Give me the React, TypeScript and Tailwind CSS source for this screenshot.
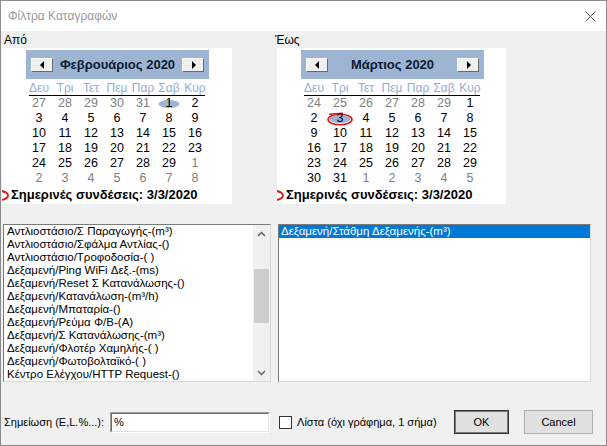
import React from "react";

type Day = { n: number; muted?: boolean };

const WEEKDAYS = ["Δευ", "Τρι", "Τετ", "Πεμ", "Παρ", "Σαβ", "Κυρ"];

function range(a: number, b: number, muted = false): Day[] {
  const out: Day[] = [];
  for (let i = a; i <= b; i++) out.push({ n: i, muted });
  return out;
}

const FEB: Day[] = [
  ...range(27, 31, true),
  ...range(1, 29),
  ...range(1, 8, true),
];

const MAR: Day[] = [
  ...range(24, 29, true),
  ...range(1, 31),
  ...range(1, 5, true),
];

const LEFT_ITEMS = [
  "Αντλιοστάσιο/Σ Παραγωγής-(m³)",
  "Αντλιοστάσιο/Σφάλμα Αντλίας-()",
  "Αντλιοστάσιο/Τροφοδοσία-( )",
  "Δεξαμενή/Ping WiFi Δεξ.-(ms)",
  "Δεξαμενή/Reset Σ Κατανάλωσης-()",
  "Δεξαμενή/Κατανάλωση-(m³/h)",
  "Δεξαμενή/Μπαταρία-()",
  "Δεξαμενή/Ρεύμα Φ/Β-(A)",
  "Δεξαμενή/Σ Κατανάλωσης-(m³)",
  "Δεξαμενή/Φλοτέρ Χαμηλής-( )",
  "Δεξαμενή/Φωτοβολταϊκό-( )",
  "Κέντρο Ελέγχου/HTTP Request-()",
];

function NavButton({ dir }: { dir: "left" | "right" }) {
  return (
    <div className="w-[22px] h-[14px] bg-[#f0f0f0] border border-t-white border-l-white border-b-[#696969] border-r-[#696969] flex items-center justify-center">
      <svg width="5" height="8" viewBox="0 0 5 8">
        {dir === "left" ? (
          <polygon points="4,0 4,8 0,4" fill="#000" />
        ) : (
          <polygon points="1,0 1,8 5,4" fill="#000" />
        )}
      </svg>
    </div>
  );
}

function Calendar({
  title,
  days,
  selected,
  today,
}: {
  title: string;
  days: Day[];
  selected: number;
  today?: boolean;
}) {
  return (
    <div className="h-[156px] bg-white relative overflow-hidden">
      <div className="mt-[2px] ml-[24px] w-[183px] h-[29px] bg-[#9db5d2] flex items-center justify-between px-[5px]">
        <NavButton dir="left" />
        <span className="text-[13px] font-bold text-[#0b1a33]">{title}</span>
        <NavButton dir="right" />
      </div>
      <div className="ml-[24px] w-[182px] mt-[3px]">
        <div className="grid grid-cols-7 h-[13px] text-[12px] leading-[13px] text-[#93acd6]">
          {WEEKDAYS.map((w) => (
            <div key={w} className="text-center">
              {w}
            </div>
          ))}
        </div>
        <div className="mx-[3px] h-px bg-black" />
        <div className="grid grid-cols-7">
          {days.map((d, i) => (
            <div
              key={i}
              className={`relative h-[15px] flex items-center justify-center text-[12.5px] ${
                d.muted ? "text-[#808080]" : "text-black"
              }`}
            >
              {i === selected && (
                <span className="absolute left-1/2 top-1/2 -translate-x-1/2 -translate-y-1/2 w-[21px] h-[8px] rounded-[50%] bg-[#9db5d2]" />
              )}
              {i === selected && today && (
                <svg
                  className="absolute left-1/2 top-1/2 -translate-x-1/2 -translate-y-1/2"
                  width="28"
                  height="14"
                  viewBox="0 0 28 14"
                >
                  <ellipse cx="14" cy="7.5" rx="12" ry="5.2" fill="none" stroke="#e01b1b" strokeWidth="1.6" />
                  <path d="M3 2.2 L17 1.2" stroke="#e01b1b" strokeWidth="1.6" fill="none" />
                </svg>
              )}
              <span className="relative">{d.n}</span>
            </div>
          ))}
        </div>
      </div>
      <div className="h-[16px] flex items-center pl-[9px] mt-[1px] text-[13px] font-bold text-black relative">
        <svg className="absolute left-0 top-[3px]" width="8" height="11" viewBox="0 0 8 11">
          <ellipse cx="-2" cy="5.5" rx="8" ry="4.5" fill="none" stroke="#e01b1b" strokeWidth="2" />
        </svg>
        Σημερινές συνδέσεις: 3/3/2020
      </div>
    </div>
  );
}

function Sunken({ className, children }: { className: string; children: React.ReactNode }) {
  return (
    <div className={`border border-t-[#a0a0a0] border-l-[#a0a0a0] border-b-white border-r-white ${className}`}>
      <div className="h-full border border-t-[#696969] border-l-[#696969] border-b-[#e3e3e3] border-r-[#e3e3e3] bg-white">
        {children}
      </div>
    </div>
  );
}

function ListBox({ className, children }: { className: string; children: React.ReactNode }) {
  return (
    <div className={`border border-t-[#7a7a7a] border-l-[#7a7a7a] border-b-[#dadada] border-r-[#dadada] bg-white ${className}`}>
      {children}
    </div>
  );
}

function Chevron({ up }: { up?: boolean }) {
  return (
    <svg width="9" height="6" viewBox="0 0 9 6">
      <polyline
        points={up ? "1,5 4.5,1.5 8,5" : "1,1 4.5,4.5 8,1"}
        fill="none"
        stroke="#606060"
        strokeWidth="1.4"
      />
    </svg>
  );
}

export default function App() {
  return (
    <div className="w-[607px] h-[446px] border border-[#8c8c8c] bg-[#f0f0f0] flex flex-col font-['Liberation_Sans',Arial,sans-serif] text-[12px] text-black overflow-hidden">
      <div className="h-[30px] shrink-0 bg-white flex items-center justify-between pl-[7px] pr-[10px]">
        <span className="text-[12px] text-[#999999]">Φίλτρα Καταγραφών</span>
        <svg width="11" height="11" viewBox="0 0 11 11">
          <path d="M0.5 0.5 L10.5 10.5 M10.5 0.5 L0.5 10.5" stroke="#555" strokeWidth="1" />
        </svg>
      </div>

      <div className="flex pl-[1px]">
        <div className="w-[230px]">
          <div className="h-[17px] leading-[18px] pl-[2px]">Από</div>
          <Calendar title="Φεβρουάριος 2020" days={FEB} selected={5} />
        </div>
        <div className="w-[231px] ml-[43px]">
          <div className="h-[17px] leading-[18px]">Έως</div>
          <div className="ml-[2px]">
            <Calendar title="Μάρτιος 2020" days={MAR} selected={8} today />
          </div>
        </div>
      </div>

      <div className="flex mt-[20px] h-[158px] pl-[1px] text-[11.5px]">
        <ListBox className="ml-[1px] w-[268px] h-full">
          <div className="flex h-full">
            <div className="flex-1 pl-[3px] leading-[13px] overflow-hidden">
              {LEFT_ITEMS.map((t) => (
                <div key={t} className="h-[13px] whitespace-nowrap">
                  {t}
                </div>
              ))}
            </div>
            <div className="w-[17px] bg-[#f0f0f0] flex flex-col items-center">
              <div className="h-[17px] flex items-center justify-center">
                <Chevron up />
              </div>
              <div className="flex-1 w-full px-px">
                <div className="mt-[27px] h-[54px] bg-[#cdcdcd]" />
              </div>
              <div className="h-[17px] flex items-center justify-center">
                <Chevron />
              </div>
            </div>
          </div>
        </ListBox>
        <ListBox className="ml-[7px] w-[313px] h-full">
          <div className="h-[13px] leading-[13px] bg-[#0078d7] text-white pl-[2px] whitespace-nowrap">
            Δεξαμενή/Στάθμη Δεξαμενής-(m³)
          </div>
        </ListBox>
      </div>

      <div className="flex items-center mt-[28px] h-[24px] pl-[3px] pr-[13px] whitespace-nowrap text-[11px]">
        <span className="shrink-0">Σημείωση (E,L.%...):</span>
        <Sunken className="ml-[6px] w-[160px] h-[21px] shrink-0">
          <div className="pl-[2px] leading-[17px]">%</div>
        </Sunken>
        <div className="ml-[9px] w-[13px] h-[13px] shrink-0 border border-[#333] bg-white" />
        <span className="ml-[5px] shrink-0">Λίστα (όχι γράφημα, 1 σήμα)</span>
        <button className="ml-auto w-[55px] h-[24px] shrink-0 border border-[#333] bg-[#e1e1e1] flex items-center justify-center">
          <span className="w-full h-full border border-[#7a7a7a] flex items-center justify-center">OK</span>
        </button>
        <button className="ml-[15px] w-[69px] h-[24px] shrink-0 border border-[#adadad] bg-[#e1e1e1] flex items-center justify-center">
          Cancel
        </button>
      </div>
    </div>
  );
}
